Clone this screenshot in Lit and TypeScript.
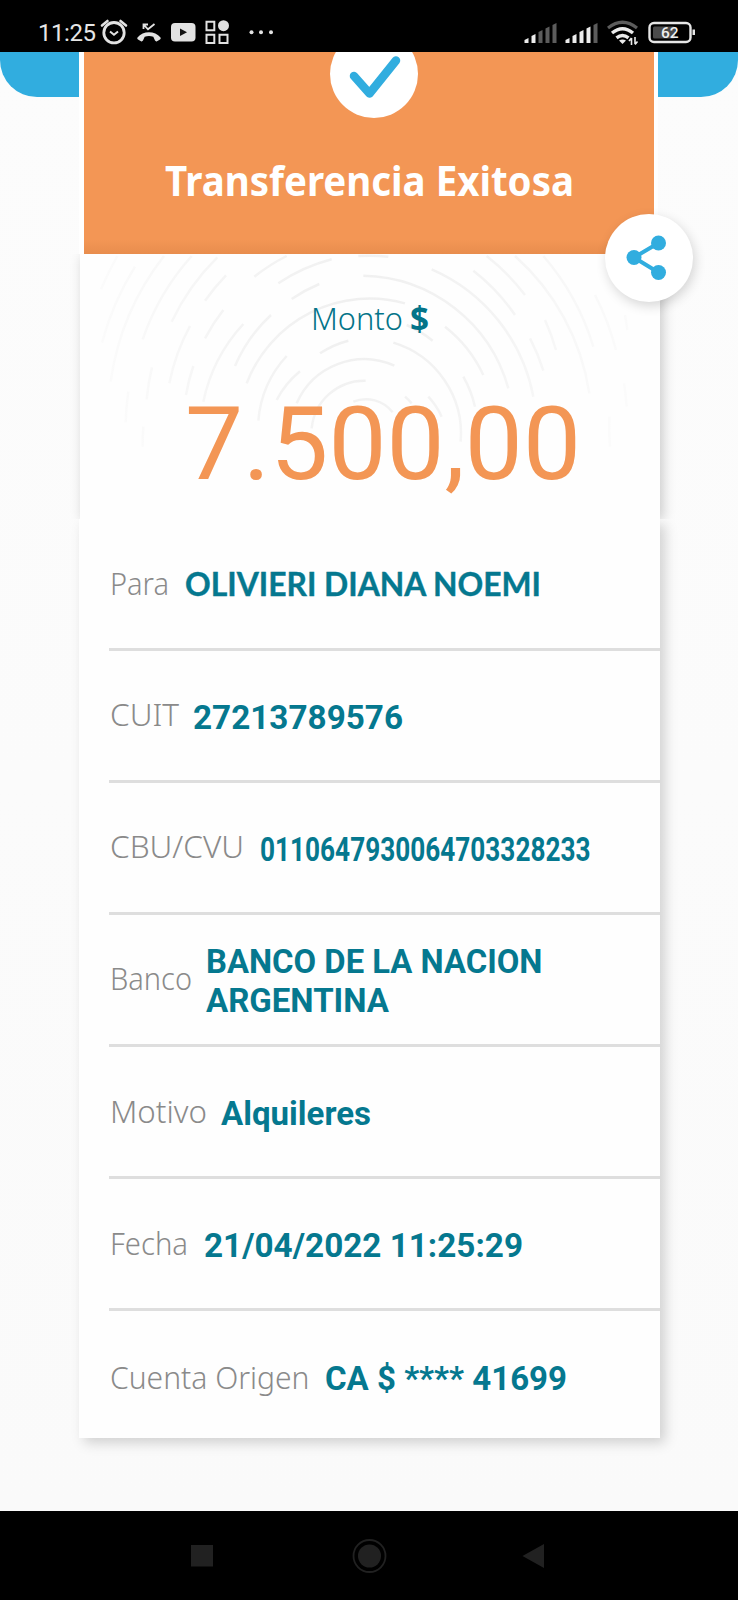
import { LitElement, html, css, svg } from "lit";
import { customElement } from "lit/decorators.js";

interface Line { text: string; width: number; y: number }
interface Row { label: Line; gap: number; value: Line[]; face?: string }

const ROWS: Row[] = [
  { label: { text: "Para", width: 59, y: 75.5 }, gap: 15, face: "name", value: [{ text: "OLIVIERI DIANA NOEMI", width: 356, y: 76.5 }] },
  { label: { text: "CUIT", width: 69, y: 75 }, gap: 13, value: [{ text: "27213789576", width: 210, y: 78 }] },
  { label: { text: "CBU/CVU", width: 134, y: 75 }, gap: 15, value: [{ text: "0110647930064703328233", width: 330.5, y: 78 }] },
  { label: { text: "Banco", width: 82, y: 75 }, gap: 13, value: [{ text: "BANCO DE LA NACION", width: 336.5, y: 58 }, { text: "ARGENTINA", width: 183, y: 97 }] },
  { label: { text: "Motivo", width: 97, y: 75.5 }, gap: 13, value: [{ text: "Alquileres", width: 150, y: 78 }] },
  { label: { text: "Fecha", width: 78, y: 75.5 }, gap: 15, value: [{ text: "21/04/2022 11:25:29", width: 319, y: 78 }] },
  { label: { text: "Cuenta Origen", width: 199.5, y: 77.5 }, gap: 14, value: [{ text: "CA $ **** 41699", width: 242, y: 79 }] },
];

/* Segment end points of the concentric ring pattern, in thirds of a pixel. */
const ARCS: number[][] = [
  [63, 118, 112, 18], [66, 278, 165, 50], [92, 395, 252, 18], [188, 268, 335, 18],
  [137, 517, 145, 425], [200, 448, 216, 352], [188, 590, 190, 530], [275, 215, 412, 22],
  [375, 152, 438, 76], [375, 265, 430, 180], [268, 400, 330, 228], [318, 435, 340, 348],
  [370, 455, 490, 222], [465, 348, 573, 195], [523, 80, 620, 18], [595, 100, 755, 28],
  [635, 147, 718, 102], [500, 400, 975, 160], [720, 310, 805, 272], [535, 512, 620, 318],
  [590, 450, 660, 364], [650, 460, 943, 347], [695, 535, 857, 392], [820, 455, 938, 487],
  [850, 77, 1285, 415], [835, 18, 925, 20], [1055, 58, 1360, 440], [1180, 62, 1305, 195],
  [1220, 18, 1335, 135], [1305, 18, 1528, 430], [1390, 18, 1540, 290], [1545, 135, 1608, 300],
  [1350, 265, 1390, 362], [1395, 210, 1428, 300], [1635, 195, 1642, 240], [1632, 400, 1640, 470],
  [1590, 590, 1588, 500], [940, 278, 1142, 575], [980, 225, 1058, 272], [1095, 230, 1210, 375],
  [1150, 380, 1185, 470], [1045, 440, 1085, 500], [975, 440, 995, 460],
];
const CX = 855, CY = 548;

const arcPath = ([x1, y1, x2, y2]: number[]) => {
  const r = (Math.hypot(x1 - CX, y1 - CY) + Math.hypot(x2 - CX, y2 - CY)) / 2;
  return svg`<path d="M${x1} ${y1}A${r} ${r} 0 0 1 ${x2} ${y2}"/>`;
};

const fitted = (cls: string, lines: Line[], height: number) => html`
  <svg class="txt ${cls}" width=${Math.max(...lines.map((l) => l.width))} height=${height}>
    ${lines.map((l) => svg`<text x="0" y=${l.y} textLength=${l.width} lengthAdjust="spacingAndGlyphs">${l.text}</text>`)}
  </svg>`;

@customElement("status-bar")
class StatusBar extends LitElement {
  static styles = css`
    :host { display: flex; justify-content: space-between; height: 52px; background: #000; }
    svg { display: block; }
    .clock { font: 400 24px Roboto, sans-serif; fill: #e6e6e6; }
    .pct { font: 500 15.5px Roboto, sans-serif; fill: #eee; }
  `;
  bars(x: number, on: number) {
    return [0, 1, 2, 3, 4].map((i) => {
      const h = [5, 9, 13, 16.5, 20][i];
      const l = x + i * 7;
      return svg`<path fill=${i < on ? "#ececec" : "#5c5c5c"} d="M${l} 43V${43 - h + 2}L${l + 4} ${43 - h}V43Z"/>`;
    });
  }
  render() {
    return html`
      <svg width="290" height="52" fill="none" stroke="#e2e2e2">
        <text class="clock" x="38" y="41" stroke="none" textLength="58">11:25</text>
        <circle cx="114" cy="32.700" r="10.200" stroke-width="2.800"/>
        <path d="M110 31.500l4 3.300 4-3.300" stroke-width="2"/>
        <path d="M102 25.500l5.500-4.500M126 25.500l-5.500-4.500" stroke-width="2.600" stroke-linecap="round"/>
        <path fill="#e2e2e2" stroke="none" d="M137.500 37.500C143 30.500 155 30.500 160.500 37.500C161 38.300 160.700 39 160 39.500L157 41.200C156.200 41.600 155.500 41.300 155 40.600L153.300 36.800C150.500 35.700 147.500 35.700 144.700 36.800L143 40.600C142.500 41.300 141.800 41.600 141 41.200L138 39.500C137.300 39 137 38.300 137.500 37.500Z"/>
        <path d="M143.500 29v-4.500h4.500M144 25l4 4.300L154.500 24" stroke-width="1.800"/>
        <rect x="171" y="23" width="24.500" height="18.500" rx="4" fill="#e2e2e2" stroke="none"/>
        <path d="M180 28.500v7.500l7-3.750z" fill="#111" stroke="none"/>
        <path d="M206.500 21.700h7.800v8.600h-7.800zM206.500 34.700h7.800v8.300h-7.800zM219.500 34.700h8v8.300h-8z" stroke-width="2"/>
        <circle cx="223.500" cy="25.700" r="5.500" fill="#e2e2e2" stroke="none"/>
        <g fill="#e2e2e2" stroke="none"><circle cx="251.500" cy="32.300" r="2"/><circle cx="261" cy="32.300" r="2"/><circle cx="271" cy="32.300" r="2"/></g>
      </svg>
      <svg width="238" height="52" viewBox="500 0 238 52" fill="none">
        ${this.bars(524.5, 2)} ${this.bars(565.5, 4)}
        <path d="M608 28Q622.500 16.500 637 28" stroke="#5c5c5c" stroke-width="3.200"/>
        <path d="M612 33Q622.500 24.500 633 33M616.500 37.800Q622.500 33 628.500 37.800" stroke="#eaeaea" stroke-width="3.400"/>
        <path d="M619 40.500Q622.500 38.500 626 40.500L622.500 44z" fill="#eaeaea"/>
        <path d="M631.500 38v7M631.500 38l-2.500 3M635 37v7M635 44.500l2.500-3" stroke="#eaeaea" stroke-width="1.600"/>
        <rect x="649.500" y="23" width="41" height="19" rx="4.500" stroke="#e6e6e6" stroke-width="2.400"/>
        <rect x="653" y="26.500" width="22" height="12" rx="1.500" fill="#4a4a4a"/>
        <path d="M692.500 29.500h2.500v5.500h-2.500z" fill="#e6e6e6"/>
        <text class="pct" x="661" y="38.300" textLength="17.500">62</text>
      </svg>`;
  }
}

@customElement("nav-bar")
class NavBar extends LitElement {
  static styles = css`
    :host { display: block; height: 89px; background: #000; }
    svg { display: block; }
  `;
  render() {
    return html`<svg width="738" height="89" fill="#212121">
      <rect x="191" y="34" width="22" height="21.500"/>
      <circle cx="369.500" cy="45" r="16" fill="none" stroke="#212121" stroke-width="1.800"/>
      <circle cx="369.500" cy="45" r="11.500"/>
      <path d="M522.500 45L544 33v24z"/>
    </svg>`;
  }
}

@customElement("app-root")
class AppRoot extends LitElement {
  static styles = css`
    :host { display: flex; flex-direction: column; width: 738px; height: 1600px; overflow: hidden; background: #fbfbfb; }
    svg { display: block; flex: none; }
    .txt { overflow: visible; font-variant-ligatures: none; }
    .page { flex: 1; position: relative; padding: 0 78px 0 79px; background: linear-gradient(#fcfcfc, #fafafa); }
    .band { position: absolute; inset: 0 0 auto; height: 44.5px; background: #31addf; border-radius: 0 0 37px 37px; }
    .head { position: relative; display: flex; flex-direction: column; align-items: center; box-sizing: border-box; width: 579px; height: 202px; border: solid #fff; border-width: 0 4px 0 5px; background: linear-gradient(#f39655 calc(100% - 14px), #e88d4e); }
    .check { margin-left: 10px; }
    .title { font: 700 42px "Noto Sans", sans-serif; fill: #fff; }
    .amount { position: relative; display: flex; flex-direction: column; align-items: flex-start; margin-left: 1px; width: 580px; height: 265px; background: #fefefe; box-shadow: 3px 2px 12px rgba(0,0,0,.2); clip-path: inset(0 -24px 0 -24px); }
    .rings { position: absolute; left: 0; top: -4px; }
    .monto { position: relative; display: flex; margin-left: 231px; gap: 6.5px; }
    .thin { font: 300 31px "Noto Sans", sans-serif; fill: #037489; }
    .cur { font: 700 34px "Noto Sans", sans-serif; fill: #037489; }
    .sum { position: relative; font: 400 102.5px Roboto, sans-serif; fill: #f39655; margin-left: 104.5px; }
    .details { position: relative; display: flex; flex-direction: column; width: 581px; height: 919px; background: #fefefe; box-shadow: 5px 5px 12px rgba(0,0,0,.17); clip-path: inset(0 -24px -24px -24px); }
    .row { display: flex; margin-left: 30px; height: 129px; border-bottom: 3px solid #dedede; }
    .row:last-child { border-bottom: 0; height: 127px; }
    .label { font: 300 31px "Noto Sans", sans-serif; fill: #8a8a8a; margin-left: 1px; }
    .value { font: 700 34px Roboto, sans-serif; fill: #05788f; margin-left: 1px; }
    .value.name { font: 700 31.5px Lato, sans-serif; stroke: #05788f; stroke-width: .4; }
    .share { position: absolute; z-index: 2; left: 605px; top: 162px; width: 88px; height: 88px; border-radius: 50%; background: #fff; box-shadow: 2px 4px 12px rgba(0,0,0,.16); }
  `;
  render() {
    return html`
      <status-bar></status-bar>
      <main class="page">
        <div class="band"></div>
        <section class="head">
          <svg class="check" width="88" height="66">
            <circle cx="44" cy="22" r="44" fill="#fff"/>
            <path d="M24 24L39.500 41.500 66 8.500" fill="none" stroke="#31addf" stroke-width="8.500" stroke-linecap="round" stroke-linejoin="round"/>
          </svg>
          ${fitted("title", [{ text: "Transferencia Exitosa", width: 409, y: 78 }], 110)}
        </section>
        <section class="amount">
          <svg class="rings" width="580" height="215" viewBox="0 0 1740 645">
            <defs><radialGradient id="g" gradientUnits="userSpaceOnUse" cx="855" cy="200" r="800">
              <stop offset="0" stop-color="#efefef"/><stop offset=".5" stop-color="#f4f4f4"/><stop offset="1" stop-color="#fbfbfb"/>
            </radialGradient></defs>
            <g fill="none" stroke="url(#g)" stroke-width="7.500">${ARCS.map(arcPath)}</g>
          </svg>
          <div class="monto">
            ${fitted("thin", [{ text: "Monto", width: 92, y: 75.5 }], 90)}
            ${fitted("cur", [{ text: "$", width: 19, y: 76.5 }], 90)}
          </div>
          ${fitted("sum", [{ text: "7.500,00", width: 396, y: 135 }], 150)}
        </section>
        <section class="details">
          ${ROWS.map((r) => html`<div class="row">
            ${fitted("label", [r.label], 127)}
            <svg width=${r.gap} height="1"></svg>
            ${fitted("value " + (r.face ?? ""), r.value, 127)}
          </div>`)}
        </section>
        <svg class="share" viewBox="0 0 88 88">
          <path d="M53.500 29L29 43.500 53.500 58.500" fill="none" stroke="#31addf" stroke-width="4"/>
          <g fill="#31addf"><circle cx="53.500" cy="29" r="7.500"/><circle cx="29" cy="43.500" r="7.500"/><circle cx="53.500" cy="58.500" r="7.500"/></g>
        </svg>
      </main>
      <nav-bar></nav-bar>`;
  }
}
